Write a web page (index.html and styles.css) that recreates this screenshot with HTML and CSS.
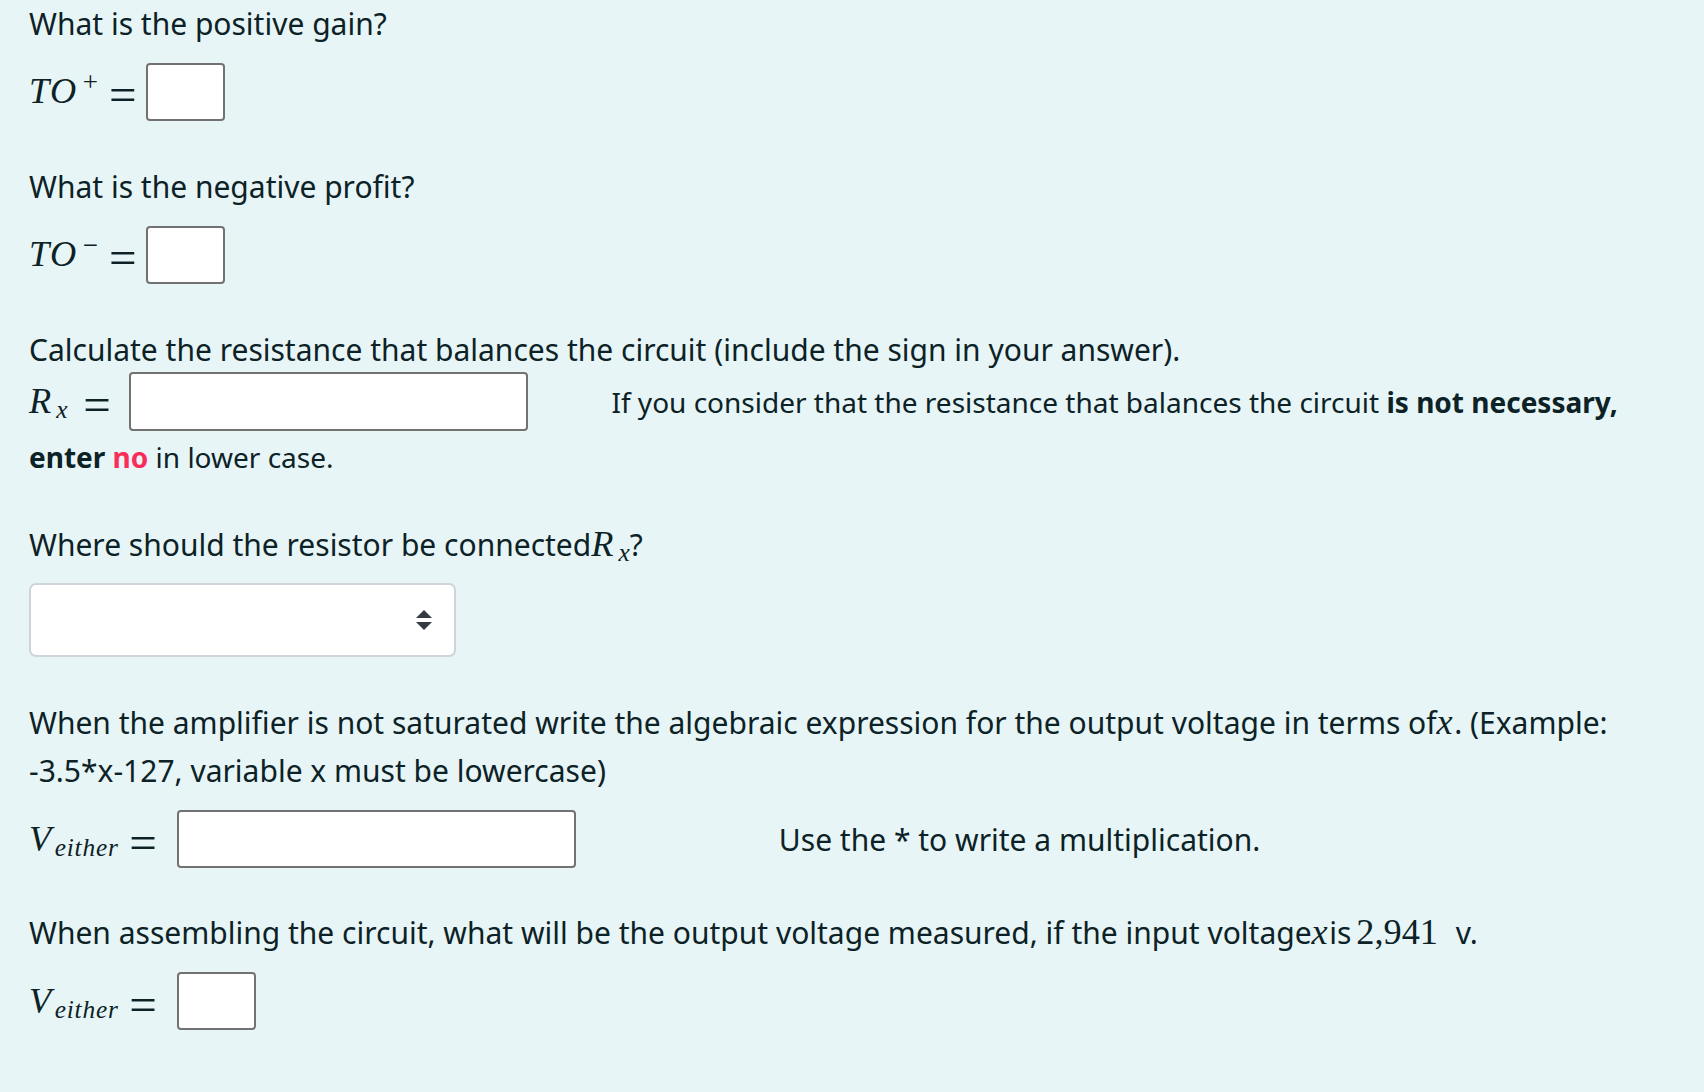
FILE: index.html
```html
<!DOCTYPE html>
<html lang="en">
<head>
<meta charset="utf-8">
<title>Quiz</title>
<link rel="stylesheet" href="styles.css">
</head>
<body>
<main class="page">
  <section class="block">
    <p class="q">What is the positive gain?</p>
    <p class="ans"><span class="m"><i>TO</i><sup class="sup">+</sup></span><span class="eq eq-tight">=</span><input class="box box-sm" type="text" aria-label="TO plus"></p>
  </section>

  <section class="block">
    <p class="q">What is the negative profit?</p>
    <p class="ans"><span class="m"><i>TO</i><sup class="sup">−</sup></span><span class="eq eq-tight">=</span><input class="box box-sm" type="text" aria-label="TO minus"></p>
  </section>

  <section class="block block-rx">
    <p class="q q-flush">Calculate the resistance that balances the circuit (include the sign in your answer).</p>
    <p class="ans"><span class="m"><i>R</i><sub class="sub sub-x">x</sub></span><span class="eq eq-r">=</span><input class="box box-wide box-rx" type="text" aria-label="Rx"><span class="note note-rx">If you consider that the resistance that balances the circuit <b>is not necessary,</b> <b>enter</b> <b class="red">no</b> in lower case.</span></p>
  </section>

  <section class="block">
    <p class="q">Where should the resistor be connected<span class="m"><i>R</i><sub class="sub sub-x">x</sub></span>?</p>
    <div class="select" role="combobox" aria-label="Connection">
      <svg class="select-arrow" viewBox="0 0 4 5" width="16" height="20" aria-hidden="true"><path d="M2 0L0 2h4zm0 5L0 3h4z" fill="#343a40"/></svg>
    </div>
  </section>

  <section class="block block-v">
    <p class="q">When the amplifier is not saturated write the algebraic expression for the output voltage in terms of<span class="m"><i>x</i></span>. (Example: <span class="nw">-3.5*x-127,</span> variable x must be lowercase)</p>
    <p class="ans"><span class="m"><i>V</i><sub class="sub sub-v">either</sub></span><span class="eq eq-v">=</span><input class="box box-wide" type="text" aria-label="V either"><span class="note-v">Use the * to write a multiplication.</span></p>
  </section>

  <section class="block">
    <p class="q">When assembling the circuit, what will be the output voltage measured, if the input voltage<span class="m"><i>x</i></span>is<span class="m num">2,941</span> v.</p>
    <p class="ans"><span class="m"><i>V</i><sub class="sub sub-v">either</sub></span><span class="eq eq-v">=</span><input class="box box-sm" type="text" aria-label="V either value"></p>
  </section>
</main>
</body>
</html>
```
FILE: styles.css
```css
* { box-sizing: border-box; }

html, body { margin: 0; }

body {
  background: #e7f5f6;
  color: #0c2227;
  font-family: "Noto Sans", "Open Sans", sans-serif;
  font-size: 30px;
  line-height: 48px;
}

.page {
  padding: 0 29px 40px;
}

.block { margin-bottom: 42px; }
.block-rx { margin-bottom: 40px; }
.block-v { margin-bottom: 41px; }

.q { margin: 0 0 14.5px; }
.q-flush { margin-bottom: -2px; }

.ans { margin: 0; }

.nw { white-space: nowrap; }

/* math */
.m {
  font-family: "Liberation Serif", "Times New Roman", serif;
  font-size: 36.3px;
  line-height: 1;
}
.m i {
  font-style: italic;
  letter-spacing: 1.5px;
}
.num {
  margin-left: 5px;
  margin-right: 10px;
}

.sup {
  font-size: 27px;
  line-height: 0;
  vertical-align: 12px;
  margin-left: 5px;
}
.sub {
  font-style: italic;
  font-size: 25.4px;
  line-height: 0;
  vertical-align: -5.5px;
}
.sub-x { margin-left: 3.5px; }
.sub-v {
  margin-left: 2px;
  letter-spacing: 0.8px;
}

.eq {
  font-family: "Liberation Serif", "Times New Roman", serif;
  font-size: 49px;
  line-height: 0;
  vertical-align: -8px;
}
.eq-tight { margin: 0 9.5px 0 11px; }
.eq-r { margin: 0 18.7px 0 15.7px; }
.eq-v { margin: 0 20px 0 10.5px; }

/* inputs */
.box {
  height: 58.6px;
  border: 2px solid #727272;
  border-radius: 4px;
  background: #fff;
  font-family: "Noto Sans", sans-serif;
  font-size: 30px;
  padding: 0 10px;
  vertical-align: baseline;
  margin: 0;
}
.box-sm { width: 79px; }
.box-wide { width: 399px; }
.box-rx { margin-bottom: 2px; }

.note { font-size: 28px; }
.note b { font-weight: 700; }
.note-rx { margin-left: 83px; }
.note-v { margin-left: 203px; }
.red { color: #fa2d5a; }

/* select */
.select {
  width: 427px;
  height: 74px;
  background: #fff;
  border: 2px solid #ced4da;
  border-radius: 7px;
  display: flex;
  align-items: center;
  justify-content: flex-end;
  padding-right: 22px;
}
.select-arrow { display: block; }
```
